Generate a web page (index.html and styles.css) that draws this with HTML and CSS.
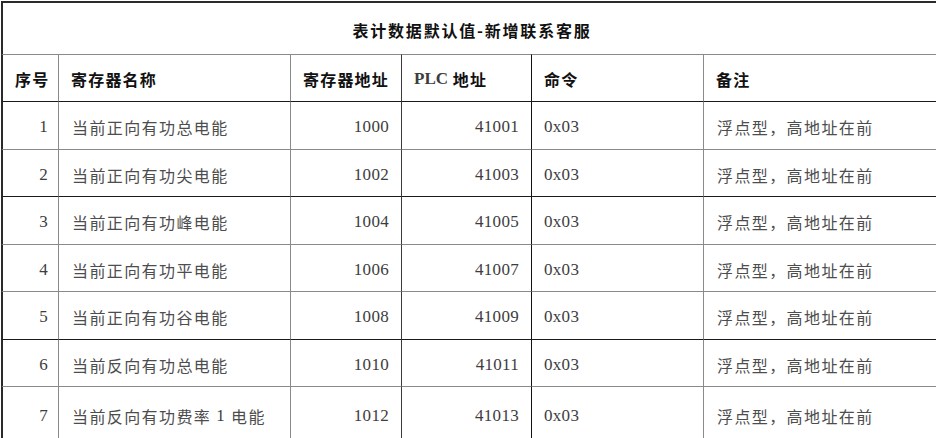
FILE: index.html
```html
<!DOCTYPE html>
<html lang="zh-CN">
<head>
<meta charset="utf-8">
<title>表计数据默认值</title>
<link rel="stylesheet" href="styles.css">
</head>
<body>
<div class="sheet">
  <div class="cell title">表计数据默认值-新增联系客服</div>

  <div class="cell head c1 r-head">序号</div>
  <div class="cell head c2 r-head">寄存器名称</div>
  <div class="cell head c3 r-head">寄存器地址</div>
  <div class="cell head c4 r-head"><span class="lat">PLC</span>&nbsp;地址</div>
  <div class="cell head c5 r-head">命令</div>
  <div class="cell head c6 r-head">备注</div>

  <div class="cell num c1 ra">1</div>
  <div class="cell txt c2 ra">当前正向有功总电能</div>
  <div class="cell num c3 ra">1000</div>
  <div class="cell num c4 ra">41001</div>
  <div class="cell lat c5 ra">0x03</div>
  <div class="cell txt c6 ra">浮点型，高地址在前</div>

  <div class="cell num c1 rb">2</div>
  <div class="cell txt c2 rb">当前正向有功尖电能</div>
  <div class="cell num c3 rb">1002</div>
  <div class="cell num c4 rb">41003</div>
  <div class="cell lat c5 rb">0x03</div>
  <div class="cell txt c6 rb">浮点型，高地址在前</div>

  <div class="cell num c1 ra">3</div>
  <div class="cell txt c2 ra">当前正向有功峰电能</div>
  <div class="cell num c3 ra">1004</div>
  <div class="cell num c4 ra">41005</div>
  <div class="cell lat c5 ra">0x03</div>
  <div class="cell txt c6 ra">浮点型，高地址在前</div>

  <div class="cell num c1 rb">4</div>
  <div class="cell txt c2 rb">当前正向有功平电能</div>
  <div class="cell num c3 rb">1006</div>
  <div class="cell num c4 rb">41007</div>
  <div class="cell lat c5 rb">0x03</div>
  <div class="cell txt c6 rb">浮点型，高地址在前</div>

  <div class="cell num c1 rb">5</div>
  <div class="cell txt c2 rb">当前正向有功谷电能</div>
  <div class="cell num c3 rb">1008</div>
  <div class="cell num c4 rb">41009</div>
  <div class="cell lat c5 rb">0x03</div>
  <div class="cell txt c6 rb">浮点型，高地址在前</div>

  <div class="cell num c1 ra">6</div>
  <div class="cell txt c2 ra">当前反向有功总电能</div>
  <div class="cell num c3 ra">1010</div>
  <div class="cell num c4 ra">41011</div>
  <div class="cell lat c5 ra">0x03</div>
  <div class="cell txt c6 ra">浮点型，高地址在前</div>

  <div class="cell num c1 rb">7</div>
  <div class="cell txt c2 rb"><span>当前反向有功费率</span><span class="lat gap">1</span><span>电能</span></div>
  <div class="cell num c3 rb">1012</div>
  <div class="cell num c4 rb">41013</div>
  <div class="cell lat c5 rb">0x03</div>
  <div class="cell txt c6 rb">浮点型，高地址在前</div>
</div>
</body>
</html>
```

FILE: styles.css
```css
html, body {
  margin: 0;
  padding: 0;
  background: #ffffff;
  overflow: hidden;
}

body {
  font-family: "Noto Sans CJK SC", "Liberation Sans", sans-serif;
  color: #4a4a4a;
}

.sheet {
  margin: 1px 0 0 1px;
  width: 940px;
  display: grid;
  grid-template-columns: 57px 232px 111px 130px 172px 238px;
  grid-template-rows: 53px 47px 48px 47px 48px 47px 48px 47px 56px;
}

.cell {
  box-sizing: border-box;
  display: flex;
  align-items: center;
  padding: 0 12px;
  border-top: 1px solid #7a7a7a;
  border-left: 1px solid #7a7a7a;
  font-size: 16px;
  letter-spacing: 1.4px;
  white-space: nowrap;
  overflow: hidden;
}

.title {
  grid-column: 1 / -1;
  justify-content: center;
  border-top: 2px solid #2a2a2a;
  border-left: 2px solid #2a2a2a;
  font-weight: 700;
  color: #111;
  font-size: 16px;
  letter-spacing: 1.8px;
  padding-top: 2px;
}

.head {
  font-weight: 700;
  color: #111;
  letter-spacing: 1.2px;
  padding-top: 2px;
}

.head.c4 .lat {
  font-family: "Liberation Serif", serif;
  font-weight: 700;
  letter-spacing: 0;
  font-size: 17px;
}

.r-head { border-top-color: #8a8a8a; }
.ra { border-top-color: #1a1a1a; }
.rb { border-top-color: #8a8a8a; }

.c1 { border-left: 2px solid #2a2a2a; }
.c2 { border-left-color: #8a8a8a; }
.c3 { border-left-color: #8a8a8a; }
.c4 { border-left-color: #3a3a3a; }
.c5 { border-left-color: #111111; }
.c6 { border-left-color: #8a8a8a; }

.num {
  justify-content: flex-end;
  font-family: "Liberation Serif", serif;
  font-size: 17px;
  letter-spacing: 0.3px;
  color: #3d3d3d;
  padding-top: 3px;
}

.c1.num { padding-right: 10px; }

.lat {
  font-family: "Liberation Serif", serif;
  font-size: 17px;
  letter-spacing: 0.3px;
  color: #3d3d3d;
}

.cell.lat { padding-top: 3px; }

.txt {
  font-weight: 400;
  color: #4d4d4d;
  padding-top: 3px;
  padding-left: 13px;
}

.txt .gap { margin: 0 6px 0 5px; }
```
